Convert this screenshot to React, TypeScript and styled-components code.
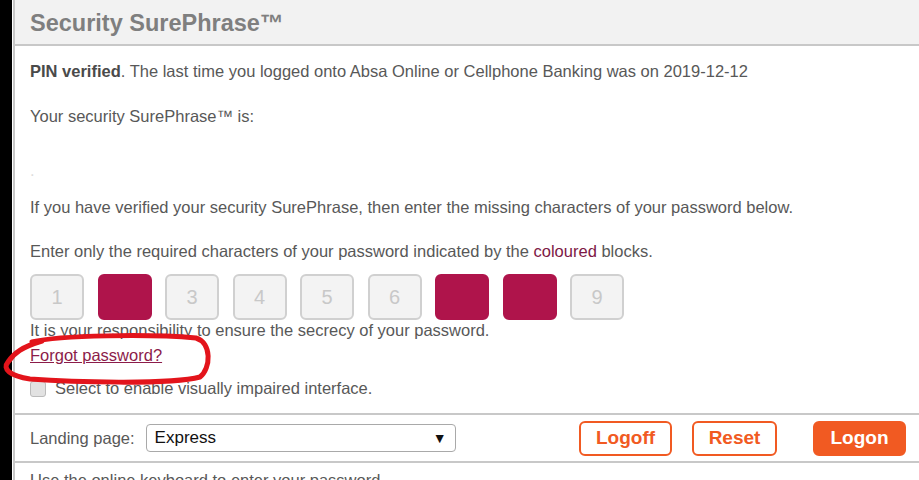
import React from 'react';
import styled, { createGlobalStyle } from 'styled-components';

const GlobalStyle = createGlobalStyle`
  html, body {
    margin: 0;
    padding: 0;
    background: #fff;
    font-family: 'Liberation Sans', Arial, sans-serif;
  }
`;

const Page = styled.div`
  display: flex;
  align-items: flex-start;
  width: 919px;
  height: 480px;
  overflow: hidden;
  position: relative;
`;

const Strip = styled.div`
  width: 12px;
  height: 480px;
  background: #000;
  flex-shrink: 0;
`;

const Panel = styled.div`
  flex: 1;
  margin-left: 1px;
  min-height: 480px;
  border-left: 2px solid #c8c8c8;
`;

const Header = styled.div`
  height: 44px;
  background: #f2f2f2;
  border-bottom: 2px solid #c8c8c8;
  padding-left: 15px;
  display: flex;
  align-items: center;
`;

const Title = styled.h2`
  margin: 2px 0 0;
  font-size: 23.5px;
  font-weight: bold;
  color: #7f7f7f;
`;

const Body = styled.div`
  padding: 0 15px;
`;

const Text = styled.p<{ $top: number }>`
  margin: ${p => p.$top}px 0 0;
  font-size: 16.5px;
  line-height: 18px;
  color: #585858;
`;

const Faint = styled.span`
  color: #ddd;
`;

const Strong = styled.b`
  color: #4a4a4a;
`;

const Accent = styled.span`
  color: #7d1845;
`;

const Boxes = styled.div`
  display: flex;
  gap: 13.5px;
  margin-top: 14px;
`;

const Box = styled.div<{ $filled: boolean }>`
  width: 54px;
  height: 46px;
  box-sizing: border-box;
  border-radius: 6px;
  border: 2px solid ${p => (p.$filled ? '#af144b' : '#d0d0d0')};
  background: ${p => (p.$filled ? '#af144b' : '#f3f3f3')};
  color: #c8c8c8;
  font-size: 20px;
  display: flex;
  align-items: center;
  justify-content: center;
`;

const Link = styled.a`
  display: block;
  margin-top: 7px;
  font-size: 16.5px;
  line-height: 18px;
  color: #8c1c4a;
  text-decoration: underline;
`;

const CheckRow = styled.label`
  display: flex;
  align-items: center;
  gap: 9px;
  margin-top: 15px;
  font-size: 16.5px;
  color: #585858;
`;

const Check = styled.span`
  width: 14px;
  height: 14px;
  border-radius: 3px;
  border: 1px solid #bbb;
  background: #e2e2e2;
`;

const ActionBar = styled.div`
  margin-top: 15px;
  border-top: 2px solid #c8c8c8;
  border-bottom: 2px solid #c8c8c8;
  height: 46px;
  display: flex;
  align-items: center;
  padding: 0 13px 0 15px;
`;

const Label = styled.span`
  font-size: 16.5px;
  color: #585858;
  margin-right: 11px;
`;

const Select = styled.div`
  width: 310px;
  height: 28px;
  box-sizing: border-box;
  border: 1px solid #a9a9a9;
  border-radius: 4px;
  display: flex;
  align-items: center;
  justify-content: space-between;
  padding: 0 8px;
  font-size: 17px;
  color: #111;
`;

const Arrow = styled.span`
  font-size: 14px;
`;

const Buttons = styled.div`
  margin-left: auto;
  display: flex;
  gap: 20px;
`;

const Button = styled.button<{ $primary?: boolean; $w: number }>`
  width: ${p => p.$w}px;
  height: 35px;
  box-sizing: border-box;
  border-radius: 6px;
  border: 2px solid #f15a22;
  background: ${p => (p.$primary ? '#f15a22' : '#fff')};
  color: ${p => (p.$primary ? '#fff' : '#f15a22')};
  font-family: 'Liberation Sans', Arial, sans-serif;
  font-size: 19px;
  font-weight: bold;
  margin-left: ${p => (p.$primary ? '16px' : '0')};
  padding: 0;
`;

const Footer = styled.p`
  margin: 8px 0 0;
  padding-left: 15px;
  font-size: 16.5px;
  line-height: 18px;
  color: #585858;
`;

const Scribble = styled.svg`
  position: absolute;
  left: 0;
  top: 0;
  pointer-events: none;
`;

const slots = [1, 2, 3, 4, 5, 6, 7, 8, 9];
const required = [2, 7, 8];

export default function App() {
  return (
    <Page>
      <GlobalStyle />
      <Strip />
      <Panel>
        <Header>
          <Title>Security SurePhrase™</Title>
        </Header>
        <Body>
          <Text $top={16}>
            <Strong>PIN verified</Strong>. The last time you logged onto Absa Online or Cellphone Banking was on 2019-12-12
          </Text>
          <Text $top={27}>Your security SurePhrase™ is:</Text>
          <Text $top={36}>
            <Faint>.</Faint>
          </Text>
          <Text $top={19}>
            If you have verified your security SurePhrase, then enter the missing characters of your password below.
          </Text>
          <Text $top={26}>
            Enter only the required characters of your password indicated by the <Accent>coloured</Accent> blocks.
          </Text>
          <Boxes>
            {slots.map(n => {
              const filled = required.includes(n);
              return (
                <Box key={n} $filled={filled}>
                  {filled ? '' : n}
                </Box>
              );
            })}
          </Boxes>
          <Text $top={1}>It is your responsibility to ensure the secrecy of your password.</Text>
          <Link>Forgot password?</Link>
          <CheckRow>
            <Check />
            Select to enable visually impaired interface.
          </CheckRow>
        </Body>
        <ActionBar>
          <Label>Landing page:</Label>
          <Select>
            <span>Express</span>
            <Arrow>▼</Arrow>
          </Select>
          <Buttons>
            <Button $w={93}>Logoff</Button>
            <Button $w={85}>Reset</Button>
            <Button $w={93} $primary>Logon</Button>
          </Buttons>
        </ActionBar>
        <Footer>Use the online keyboard to enter your password.</Footer>
      </Panel>
      <Scribble width="919" height="480">
        <path
          d="M 32 342 C 60 335, 150 334, 196 338 C 212 343, 211 368, 200 377 C 170 385, 70 382, 30 379 C 10 376, 2 369, 8 362 C 14 353, 22 347, 42 341"
          fill="none"
          stroke="#e3141b"
          strokeWidth="5"
          strokeLinecap="round"
        />
      </Scribble>
    </Page>
  );
}
